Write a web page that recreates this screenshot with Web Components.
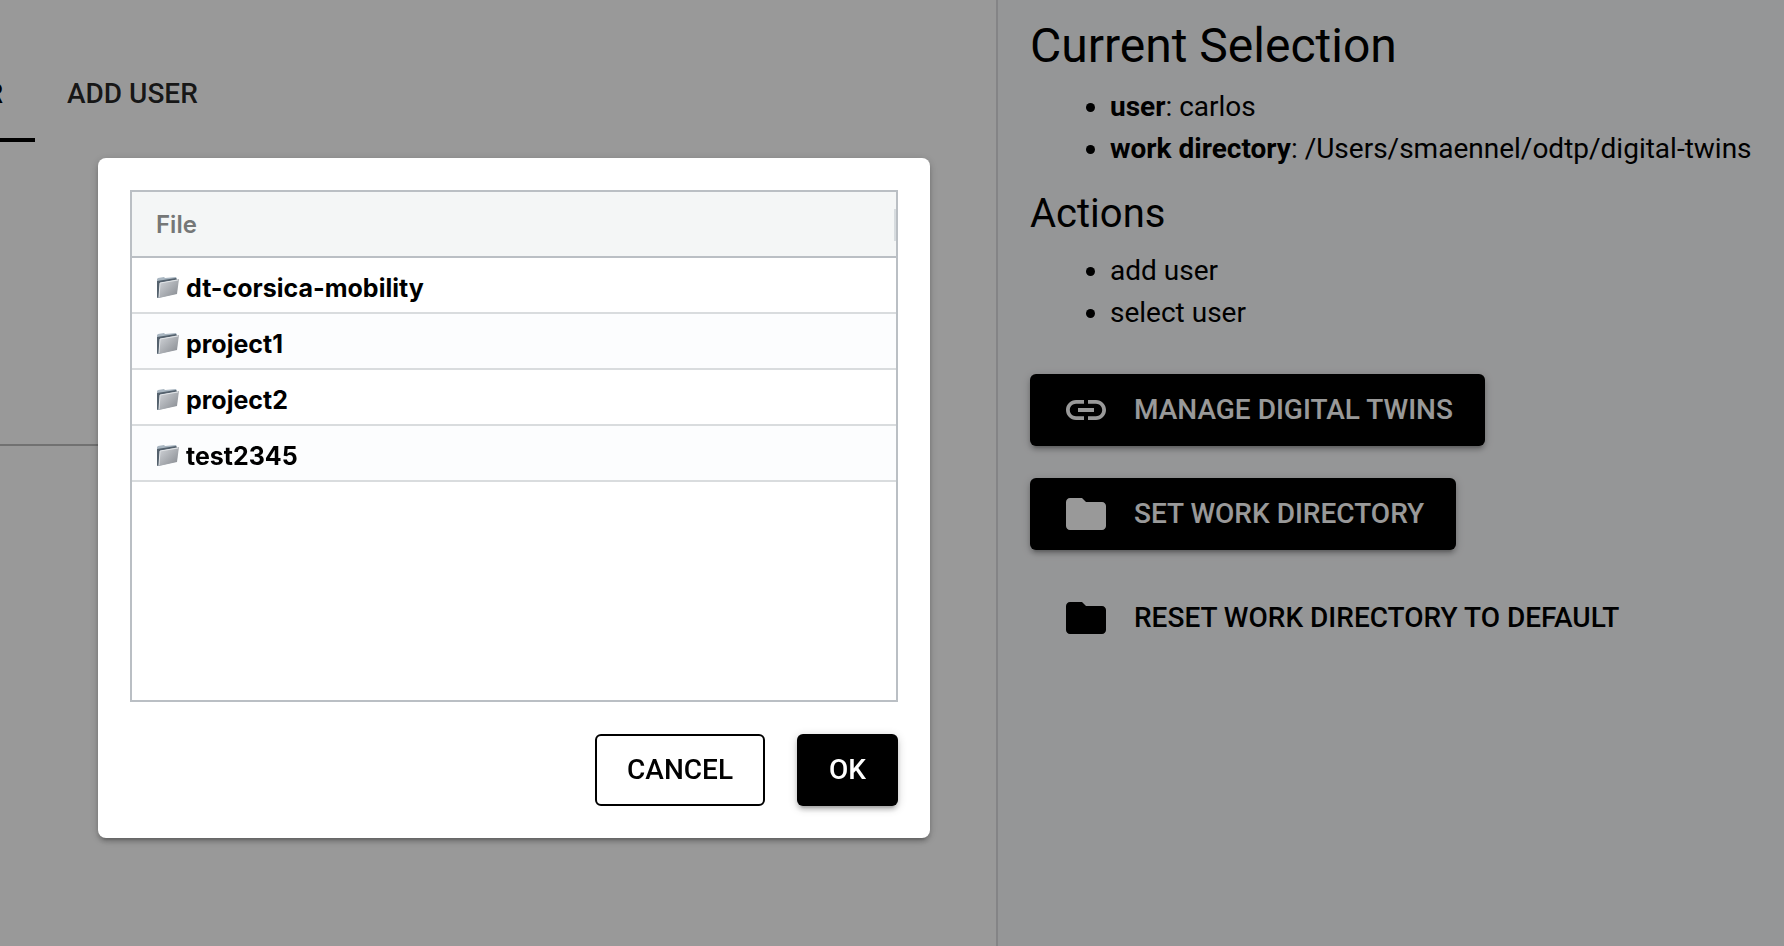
<!DOCTYPE html>
<html lang="en">
<head>
<meta charset="utf-8">
<title>Users</title>
<style>
  html, body { margin: 0; min-height: 100%; background: #fff; }
  body { font: 28px/42px Roboto, "Liberation Sans", sans-serif; color: #000; }
</style>
</head>
<body>
<user-page></user-page>
<script>
const define = (name, html) => {
  const template = document.createElement('template');
  template.innerHTML = html;
  customElements.define(name, class extends HTMLElement {
    constructor() {
      super();
      this.attachShadow({ mode: 'open' }).append(template.content.cloneNode(true));
    }
  });
};

define('app-icon-link', `
<style>:host { display: block; width: 48px; height: 48px } svg { display: block; width: 100%; height: 100%; fill: currentColor }</style>
<svg viewBox="0 0 24 24" aria-hidden="true"><path d="M3.9 12c0-1.71 1.39-3.1 3.1-3.1h4V7H7c-2.76 0-5 2.24-5 5s2.24 5 5 5h4v-1.9H7c-1.71 0-3.1-1.39-3.1-3.1zM8 13h8v-2H8v2zm9-6h-4v1.9h4c1.71 0 3.1 1.39 3.1 3.1s-1.39 3.1-3.1 3.1h-4V17h4c2.76 0 5-2.24 5-5s-2.24-5-5-5z"/></svg>`);

define('app-icon-folder', `
<style>:host { display: block; width: 48px; height: 48px } svg { display: block; width: 100%; height: 100%; fill: currentColor }</style>
<svg viewBox="0 0 24 24" aria-hidden="true"><path d="M10 4H4c-1.1 0-1.99.9-1.99 2L2 18c0 1.1.9 2 2 2h16c1.1 0 2-.9 2-2V8c0-1.1-.9-2-2-2h-8l-2-2z"/></svg>`);

define('app-button', `
<style>
  :host { display: inline-flex }
  button { display: flex; align-items: center; gap: 24px; height: 72px; padding: 0 32px; border: 0; border-radius: 6px;
    background: #000; color: #fff; font: 500 28px/48px Roboto, sans-serif; text-transform: uppercase; white-space: nowrap;
    box-shadow: 0 2px 10px #0003, 0 4px 4px #00000024, 0 6px 2px -4px #0000001f; }
  :host([flat]) button, :host([outline]) button { background: transparent; color: #000; box-shadow: none }
  :host([outline]) button { border: 2px solid #000; padding: 0 30px }
</style>
<button type="button"><slot name="icon"></slot><slot></slot></button>`);

define('user-tabs', `
<style>
  :host { display: block; padding-top: 46px }
  div { display: flex }
  button { display: flex; align-items: center; justify-content: flex-end; height: 96px; padding: 0 32px; border: 0;
    background: none; font: 500 28px/48px Roboto, sans-serif; color: #000000d9; white-space: nowrap }
  .active { width: 35px; padding-left: 0; overflow: hidden; color: #000; border-bottom: 4px solid #000; padding-top: 4px }
</style>
<div role="tablist"><button class="active" role="tab" aria-selected="true">R</button><button role="tab" aria-selected="false">ADD USER</button></div>`);

define('selection-panel', `
<style>
  :host { display: block; box-sizing: border-box; padding: 14px 32px 32px; border-left: 2px solid #dcdddf; background: #f9fafc }
  h1, h2 { margin: 0; font-weight: 400 }
  h1 { font-size: 48px; line-height: 64px }
  h2 { font-size: 40px; line-height: 56px }
  ul { margin: 8px 0 16px; padding-left: 80px }
  li { white-space: nowrap }
  .actions { display: flex; flex-direction: column; align-items: flex-start; gap: 32px; margin-top: 40px }
</style>
<h1>Current Selection</h1>
<ul><li><b>user</b>: carlos</li><li><b>work directory</b>: /Users/smaennel/odtp/digital-twins</li></ul>
<h2>Actions</h2>
<ul><li>add user</li><li>select user</li></ul>
<div class="actions">
  <app-button><app-icon-link slot="icon"></app-icon-link>Manage digital twins</app-button>
  <app-button><app-icon-folder slot="icon"></app-icon-folder>Set work directory</app-button>
  <app-button flat><app-icon-folder slot="icon"></app-icon-folder>Reset work directory to default</app-button>
</div>`);

define('file-name', `
<style>
  :host { display: flex; align-items: center; gap: 6px }
  svg { width: 24px; height: 24px }
</style>
<svg viewBox="0 0 24 24" aria-hidden="true">
  <defs>
    <linearGradient id="front" x1="0" y1="0" x2="1" y2="1"><stop offset="0" stop-color="#d3d6da"/><stop offset="1" stop-color="#84888e"/></linearGradient>
  </defs>
  <path fill="#a9b6c1" d="M1 3l1-1 6-1 1 1 11-1 1 2-2 15L2 22 1 21z"/>
  <path fill="#54616d" d="M1 5l19-3 1 2-17 3-1 14-2 1z"/>
  <path fill="url(#front)" d="M4 7l19-4-2 15L3 22z"/>
  <path fill="none" stroke="#e3e6e9" d="M3 21L4 7l18-3"/>
</svg><slot></slot>`);

define('file-grid', `
<style>
  :host { display: block; box-sizing: border-box; height: 512px; border: 2px solid #babfc4; background: #fff;
    font: 24px/36px Inter, sans-serif }
  table { width: 100%; border-collapse: separate; border-spacing: 0 }
  th, td { box-sizing: border-box; padding: 0 24px; text-align: left }
  th { height: 66px; padding: 2px 0 0 24px; border-bottom: 2px solid #babfc4; background: #f4f6f6; font-weight: 600; color: #757777 }
  td { height: 56px; padding-top: 6px; border-bottom: 2px solid #d9dcde; font-size: 25px; font-weight: 700 }
  tr:nth-child(even) td { background: #fcfdfe }
  th div { display: flex; justify-content: space-between; align-items: center }
  i { width: 2px; height: 32px; background: #d7dcdf }
</style>
<table>
  <thead><tr><th scope="col"><div>File<i></i></div></th></tr></thead>
  <tbody>
    <tr><td><file-name>dt-corsica-mobility</file-name></td></tr>
    <tr><td><file-name>project1</file-name></td></tr>
    <tr><td><file-name>project2</file-name></td></tr>
    <tr><td><file-name>test2345</file-name></td></tr>
  </tbody>
</table>`);

define('file-dialog', `
<style>
  :host { position: fixed; inset: 0; display: flex; align-items: flex-start; padding: 158px 98px 0; background: #0006 }
  section { box-sizing: border-box; width: 100%; max-width: 832px; padding: 32px; border-radius: 8px; background: #fff;
    box-shadow: 0 2px 10px #0003, 0 4px 4px #00000024, 0 6px 2px -4px #0000001f }
  footer { display: flex; justify-content: flex-end; gap: 32px; margin-top: 32px }
</style>
<section role="dialog" aria-modal="true" aria-label="Pick a directory">
  <file-grid></file-grid>
  <footer><app-button outline>Cancel</app-button><app-button>OK</app-button></footer>
</section>`);

define('user-page', `
<style>
  :host { display: grid; grid-template-columns: minmax(0, 1fr) 788px; min-height: 100vh }
  hr { width: 20%; margin: 302px 0 0; border: 0; border-top: 2px solid #bdbdbd }
</style>
<main><user-tabs></user-tabs><hr></main>
<selection-panel></selection-panel>
<file-dialog></file-dialog>`);
</script>
</body>
</html>
